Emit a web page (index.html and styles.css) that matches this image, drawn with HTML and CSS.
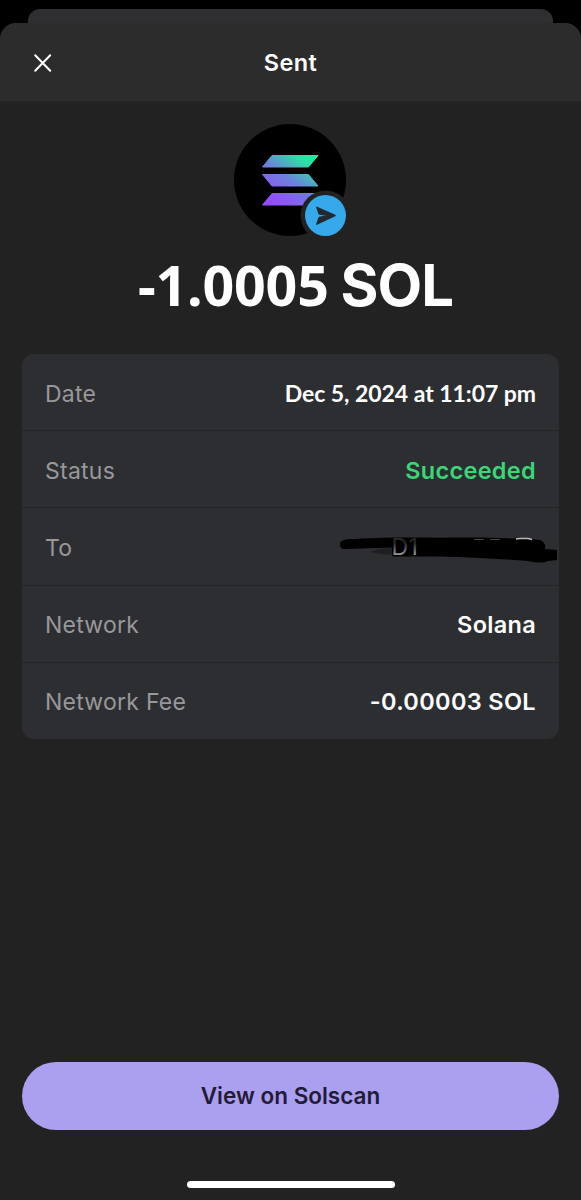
FILE: index.html
```html
<!DOCTYPE html>
<html lang="en">
<head>
<meta charset="utf-8">
<title>Sent</title>
<link rel="stylesheet" href="styles.css">
</head>
<body>
<div class="screen">
  <div class="back-sheet"></div>
  <main class="sheet">
    <header class="header">
      <svg class="close" viewBox="0 0 20 20" role="img" aria-label="Close"><path d="M2.2 2.2 17.2 17.8M17.2 2.2 2.2 17.8"/></svg>
      <h1 class="title">Sent</h1>
    </header>
    <section class="hero">
      <svg class="token" viewBox="0 0 112 112" aria-hidden="true">
        <defs>
          <linearGradient id="sol" gradientUnits="userSpaceOnUse" x1="78" y1="26" x2="36" y2="86">
            <stop offset="0" stop-color="#1df29c"/>
            <stop offset=".2" stop-color="#2fdda5"/>
            <stop offset=".5" stop-color="#6b83dc"/>
            <stop offset=".75" stop-color="#8a5cf0"/>
            <stop offset="1" stop-color="#9945ff"/>
          </linearGradient>
        </defs>
        <circle cx="56" cy="56" r="56" fill="#000"/>
        <path fill="url(#sol)" stroke="url(#sol)" stroke-linejoin="round" d="M38 31.500H84L74.500 43H28.500ZM28.500 50.500H74.500L84 62H38ZM38 69.500H84L74.500 81H28.500Z"/>
        <circle cx="91.500" cy="91.500" r="25" fill="#222"/>
        <circle cx="91.500" cy="91.500" r="20.500" fill="#36a9ea"/>
        <path fill="#222a31" stroke="#222a31" stroke-width="1.400" stroke-linejoin="round" d="M82.800 83.300 101 91.500 82.800 100.200 85.200 93.500 93 92 93 91 85.200 90Z"/>
      </svg>
      <p class="amount"><span class="number">-1.0005</span><span class="unit">SOL</span></p>
    </section>
    <dl class="details">
      <div class="row"><dt>Date</dt><dd class="date">Dec 5, 2024 at 11:07 pm</dd></div>
      <div class="row"><dt>Status</dt><dd class="success">Succeeded</dd></div>
      <div class="row"><dt>To</dt><dd class="recipient">
        <svg class="scribble" viewBox="0 0 220 30">
          <defs>
            <linearGradient id="fade" x1="0" y1="0" x2="0" y2="1">
              <stop offset=".35" stop-color="#262626"/>
              <stop offset=".8" stop-color="#a0a0a0"/>
            </linearGradient>
          </defs>
          <path class="hint" d="M30 15Q42 10 54 11V18Q42 18 30 15Z"/>
          <path d="M0 6Q1 3 8 2.200C30 .5 68 0 100 .700 140 0 180 1 200 3Q206 5 205 12L217 13V23L208 24Q201 27 188 24C160 22 130 20 100 19.500H52V10.500L4 12Q0 12 0 7Z"/>
          <text class="address" x="51.500" y="18.300" fill="url(#fade)">D1</text>
          <path class="mark" d="M134 2.500h10M150 2.500h10"/>
          <path class="mark bright" d="M176 2 180 1.500h8l4 1"/>
        </svg></dd></div>
      <div class="row"><dt>Network</dt><dd>Solana</dd></div>
      <div class="row"><dt>Network Fee</dt><dd class="fee">-0.00003 SOL</dd></div>
    </dl>
    <footer class="footer">
      <button class="button" type="button">View on Solscan</button>
      <div class="home-bar"></div>
    </footer>
  </main>
</div>
</body>
</html>
```
FILE: styles.css
```css
* { box-sizing: border-box; }
body { margin: 0; background: #000; color: #fff; font-family: Inter, "Liberation Sans", sans-serif; }
.screen { height: 1200px; padding-top: 9px; display: flex; flex-direction: column; overflow: hidden; }
.back-sheet { height: 14px; flex: none; margin: 0 28px; border-radius: 12px 12px 0 0; background: #2f2f31; }
.sheet { flex: 1; display: flex; flex-direction: column; background: #222; border-radius: 16px 16px 0 0; overflow: hidden; }
.header { height: 79px; flex: none; display: grid; grid-template-columns: 85px 1fr 85px; align-items: center; background: #2c2c2c; border-bottom: 1px solid #272727; }
.close { width: 20px; height: 20px; margin: 2px 0 0 33px; fill: none; stroke: #fff; stroke-width: 2; stroke-linecap: round; }
.title { margin: 0; padding-top: 2px; text-align: center; font-size: 23.5px; font-weight: 600; letter-spacing: .4px; line-height: 30px; }
.hero { display: flex; flex-direction: column; align-items: center; padding-top: 22px; }
.token { width: 112px; height: 112px; margin-right: 1px; overflow: visible; }
.amount { margin: 16px 0 0 10px; width: 315px; height: 66px; display: flex; align-items: baseline; justify-content: space-between; line-height: 66px; white-space: nowrap; font-weight: 700; }
.number { font-family: "Noto Sans", sans-serif; font-size: 55.5px; letter-spacing: -.2px; }
.unit { font-size: 58px; font-weight: 700; letter-spacing: -1px; }
.details { margin: 36px 22px 0; border-radius: 12px; background: #2d2e31; overflow: hidden; }
.row { height: 77.2px; display: flex; align-items: center; justify-content: space-between; padding: 3px 23px 0; border-bottom: 1.5px solid #232426; font-size: 23.5px; line-height: 30px; }
.row:last-child { border-bottom: 0; height: 76px; }
dt { font-size: 23px; color: #98989b; letter-spacing: .25px; }
dd { margin: 0; font-weight: 600; letter-spacing: .3px; }
.date { padding-bottom: 2px; font-family: Lato, sans-serif; font-size: 23px; font-weight: 700; letter-spacing: -.05px; }
.success { color: #3ad678; }
.fee { letter-spacing: .35px; }
.recipient { position: relative; width: 145px; height: 30px; }
.scribble { position: absolute; left: -51px; top: 4px; width: 220px; height: 30px; overflow: visible; }
.hint { opacity: .3; }
.address { font-size: 23px; font-weight: 400; }
.mark { fill: none; stroke: #444; stroke-width: 1; }
.bright { stroke: #bbb; stroke-width: 1.5; }
.footer { margin-top: auto; display: flex; flex-direction: column; align-items: center; padding: 0 22px 12px; }
.button { width: 100%; height: 68px; padding: 0 0 2px; border: 0; border-radius: 34px; background: #ab9ff0; color: #211b38; font: 600 22.5px Inter, sans-serif; letter-spacing: 0; }
.home-bar { width: 208px; height: 7px; margin-top: 51px; border-radius: 4px; background: #fff; }
```
